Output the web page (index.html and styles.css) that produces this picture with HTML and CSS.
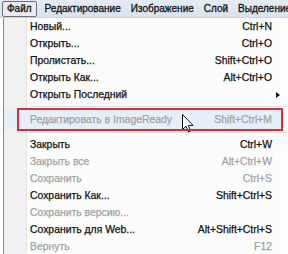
FILE: index.html
```html
<!DOCTYPE html>
<html lang="ru">
<head>
    <meta charset="UTF-8">
    <title>Файл</title>
    <link rel="stylesheet" href="styles.css">
</head>
<body>

<div class="menubar">
    <span class="top active">Файл</span>
    <span class="top">Редактирование</span>
    <span class="top">Изображение</span>
    <span class="top">Слой</span>
    <span class="top">Выделение</span>
</div>

<div class="dropdown">
    <ul class="items">
        <li class="item"><span class="label">Новый...</span><span class="key">Ctrl+N</span></li>
        <li class="item"><span class="label">Открыть...</span><span class="key">Ctrl+O</span></li>
        <li class="item"><span class="label">Пролистать...</span><span class="key">Shift+Ctrl+O</span></li>
        <li class="item"><span class="label">Открыть Как...</span><span class="key">Alt+Ctrl+O</span></li>
        <li class="item"><span class="label">Открыть Последний</span><span class="arrow"></span></li>
        <li class="sep"></li>
        <li class="item hl off">
            <span class="label">Редактировать в ImageReady</span><span class="key">Shift+Ctrl+M</span>
            <svg class="cursor" width="12" height="19" viewBox="0 0 12 19">
                <path d="M0.5 0.5 L0.5 15.5 L4 12.2 L6.6 18 L8.8 17 L6.3 11.4 L11 11.4 Z" fill="#fff" stroke="#111" stroke-width="1"/>
            </svg>
        </li>
        <li class="sep"></li>
        <li class="item"><span class="label">Закрыть</span><span class="key">Ctrl+W</span></li>
        <li class="item off"><span class="label">Закрыть все</span><span class="key">Alt+Ctrl+W</span></li>
        <li class="item off"><span class="label">Сохранить</span><span class="key">Ctrl+S</span></li>
        <li class="item"><span class="label">Сохранить Как...</span><span class="key">Shift+Ctrl+S</span></li>
        <li class="item off"><span class="label">Сохранить версию...</span><span class="key"></span></li>
        <li class="item"><span class="label">Сохранить для Web...</span><span class="key">Alt+Shift+Ctrl+S</span></li>
        <li class="item off"><span class="label">Вернуть</span><span class="key">F12</span></li>
        <li class="sep"></li>
    </ul>
</div>

</body>
</html>
```

FILE: styles.css
```css
body {
    margin: 0;
    padding: 0;
    background: #fff;
    font-family: "Liberation Sans", Arial, sans-serif;
    font-size: 10.4px;
    color: #111;
    overflow: hidden;
}
.menubar {
    display: flex;
    align-items: center;
    height: 18px;
    padding-left: 2px;
    background: linear-gradient(#e4ebf4, #d9e3ee);
    border-bottom: 1px solid #c9d3de;
    box-sizing: border-box;
    white-space: nowrap;
    overflow: hidden;
    font-size: 10px;
    -webkit-text-stroke: 0.3px #111;
}
.top {
    padding: 0 4px;
    line-height: 14px;
    border: 1px solid transparent;
}
.top.active {
    border-color: #6b6f75;
    background: #e9ecef;
    border-radius: 2px;
    margin-right: 3px;
}
.dropdown {
    margin-left: 3px;
    width: 283px;
    border-left: 1px solid #8a8a8a;
    background: linear-gradient(to right, #f1f1f1 0, #f1f1f1 22px, #e2e3e3 22px, #e2e3e3 23px, #fff 23px, #fff 24px, #fcfcfc 24px);
}
.items {
    list-style: none;
    margin: 0;
    padding: 0;
}
.item {
    position: relative;
    display: flex;
    align-items: center;
    height: 17px;
    padding: 0 15px 0 26px;
    -webkit-text-stroke: 0.25px currentColor;
}
.item .label {
    flex: 1;
}
.item .key {
    text-align: right;
}
.item.off {
    color: #a2a2a2;
}
.arrow {
    width: 0;
    height: 0;
    border-top: 3px solid transparent;
    border-bottom: 3px solid transparent;
    border-left: 4px solid #111;
    margin-right: -8px;
}
.sep {
    height: 1px;
    margin: 3px 0 3px 26px;
    background: #e0e0e0;
}
.item.hl {
    height: 19px;
    margin: 1px 4px 1px 0;
    padding-right: 11px;
    background: #e6eef7;
}
.item.hl::after {
    content: "";
    position: absolute;
    left: 13px;
    right: 0;
    top: -2px;
    bottom: -2px;
    border: 2px solid #d2303e;
}
.cursor {
    position: absolute;
    left: 178px;
    top: 4px;
}
```
